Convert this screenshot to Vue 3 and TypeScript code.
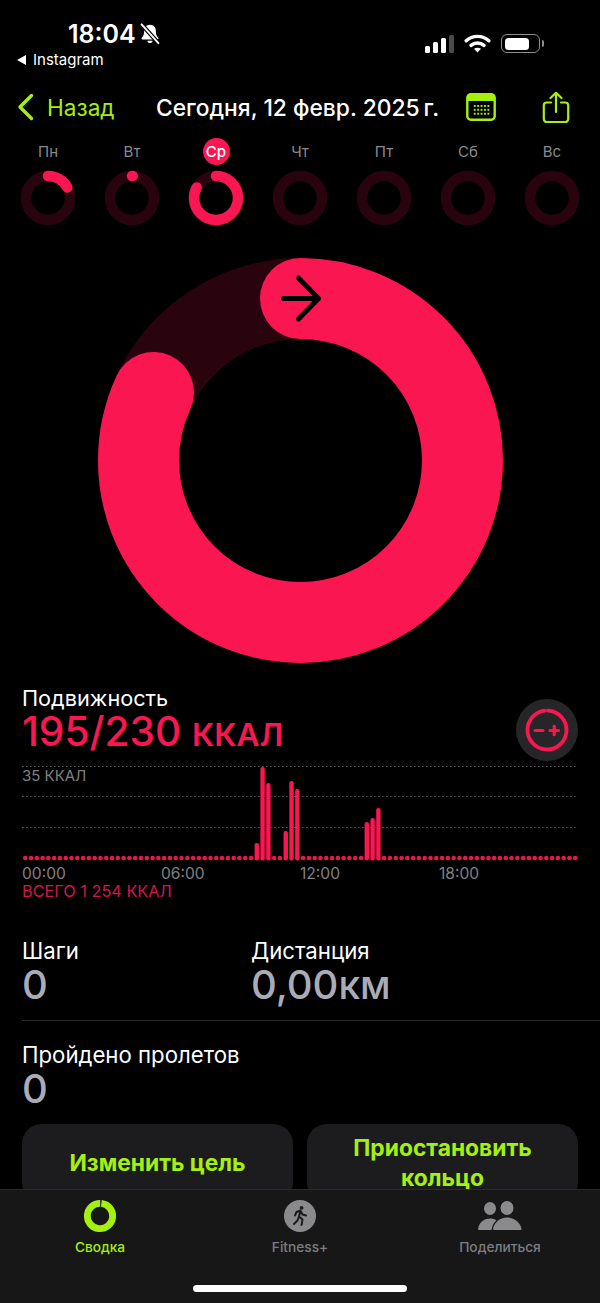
<script setup lang="ts">
const days = [
  { label: 'Пн', value: 17, today: false },
  { label: 'Вт', value: 0.6, today: false },
  { label: 'Ср', value: 83, today: true },
  { label: 'Чт', value: 0, today: false },
  { label: 'Пт', value: 0, today: false },
  { label: 'Сб', value: 0, today: false },
  { label: 'Вс', value: 0, today: false },
]

// quarter-hour buckets, value = bar top in chart px (0 = highest)
const tall: Record<number, number> = {
  40: 77,
  41: 1,
  42: 17,
  45: 65,
  46: 15,
  47: 23,
  59: 56,
  60: 52,
  61: 42,
}
const buckets = Array.from({ length: 96 }, (_, i) => ({
  x: 3.2 + i * 5.79,
  top: tall[i],
}))

const gridLines = [0.5, 30.5, 61.5]
const hours = ['00:00', '06:00', '12:00', '18:00']
const calDots = [0, 1, 2, 3, 4].flatMap((c) => [0, 1, 2].map((r) => ({ c, r })))
</script>

<template>
  <div class="screen">
    <header class="status">
      <div class="status-left">
        <div class="clock">
          <span>18:04</span>
          <svg width="22" height="22" viewBox="0 0 21 20">
            <path d="M10.5 1.2c-3.6 0-5.6 2.7-5.6 6 0 3.2-.6 4.6-2.3 6.6-.5.6-.1 1.4.7 1.4h14.4c.8 0 1.2-.8.7-1.4-1.7-2-2.300-3.400-2.300-6.600 0-3.300-2-6-5.600-6z" fill="#fff" />
            <path d="M8 16.400h5c-.2 1.300-1.200 2.200-2.500 2.200S8.200 17.700 8 16.400z" fill="#fff" />
            <path d="M2.500 .8l16 18" stroke="#000" stroke-width="4" />
            <path d="M2.500 .8l16 18" stroke="#fff" stroke-width="1.800" stroke-linecap="round" />
          </svg>
        </div>
        <div class="back-app"><i class="tri"></i>Instagram</div>
      </div>
      <div class="status-right">
        <div class="signal">
          <i style="height: 7px"></i>
          <i style="height: 11px"></i>
          <i style="height: 15px"></i>
          <i class="off" style="height: 18px"></i>
        </div>
        <svg width="27" height="19" viewBox="0 0 27 19" fill="none" stroke="#fff" stroke-width="3.400" stroke-linecap="round">
          <path d="M2.200 6.800C8.500.9 18.500.9 24.800 6.800" />
          <path d="M7 11.400c3.700-3.200 9.300-3.200 13 0" />
          <path d="M13.500 18.400l-3.500-3.700c2-1.400 5-1.400 7 0z" fill="#fff" stroke="none" />
        </svg>
        <div class="battery">
          <div class="battery-body"><i></i></div>
          <b></b>
        </div>
      </div>
    </header>

    <nav class="topbar">
      <div class="back">
        <svg width="17" height="28" viewBox="0 0 17 28" fill="none">
          <path d="M14.500 2.500L3 14l11.500 11.500" stroke="#a4f00f" stroke-width="3.400" stroke-linecap="round" stroke-linejoin="round" />
        </svg>
        <span>Назад</span>
      </div>
      <div class="title">Сегодня, 12 февр. 2025&#8239;г.</div>
      <div class="actions">
        <svg width="30" height="28" viewBox="0 0 30 28">
          <rect x="1.300" y="1.300" width="27.400" height="25.400" rx="3.500" fill="none" stroke="#a4f00f" stroke-width="2.400" />
          <path d="M1 4a3 3 0 0 1 3-3h22a3 3 0 0 1 3 3v4H1z" fill="#a4f00f" />
          <rect
            v-for="d in calDots"
            :key="`${d.c}-${d.r}`"
            :x="7.800 + d.c * 3.400"
            :y="12 + d.r * 3.900"
            width="1.900"
            height="1.900"
            fill="#a4f00f"
          />
        </svg>
        <svg width="28" height="33" viewBox="0 0 28 33" fill="none" stroke="#a4f00f" stroke-width="2.200" stroke-linecap="round" stroke-linejoin="round">
          <path d="M9 11.500H4.800a3 3 0 0 0-3 3V28a3 3 0 0 0 3 3h18.400a3 3 0 0 0 3-3V14.500a3 3 0 0 0-3-3H19" />
          <path d="M14 21V2M8.500 7L14 1.800 19.500 7" />
        </svg>
      </div>
    </nav>

    <section class="week">
      <div v-for="day in days" :key="day.label" class="day">
        <span class="day-label" :class="{ today: day.today }">{{ day.label }}</span>
        <svg width="56" height="56" viewBox="0 0 56 56" class="day-ring">
          <circle cx="28" cy="28" r="22" fill="none" stroke="#29040f" stroke-width="10.500" />
          <circle
            v-if="day.value"
            cx="28"
            cy="28"
            r="22"
            fill="none"
            stroke="#fa1650"
            stroke-width="10.500"
            stroke-linecap="round"
            pathLength="100"
            :stroke-dasharray="`${day.value} 100`"
            transform="rotate(-90 28 28)"
          />
        </svg>
      </div>
    </section>

    <div class="ring-wrap">
      <svg width="405" height="405" viewBox="0 0 405 405">
        <circle cx="202.500" cy="202.500" r="162" fill="none" stroke="#29040f" stroke-width="81" />
        <circle
          cx="202.500"
          cy="202.500"
          r="162"
          fill="none"
          stroke="#fa1650"
          stroke-width="81"
          stroke-linecap="round"
          pathLength="100"
          stroke-dasharray="81.900 100"
          transform="rotate(-90 202.500 202.500)"
        />
        <path
          d="M185.500 40.500h35M200.500 20l20 20.500-20 20.500"
          fill="none"
          stroke="#000"
          stroke-width="5"
          stroke-linecap="round"
          stroke-linejoin="round"
        />
      </svg>
    </div>

    <section class="move">
      <div class="move-head">
        <div>
          <div class="label move-label">Подвижность</div>
          <div class="move-value">195/230 <span>ККАЛ</span></div>
        </div>
        <div class="goal-btn">
          <svg width="46" height="46" viewBox="0 0 46 46" fill="none" stroke="#fa1650" stroke-linecap="round">
            <circle cx="23" cy="23" r="19.500" stroke-width="3.800" pathLength="100" stroke-dasharray="97 100" transform="rotate(-87 23 23)" />
            <path d="M11 23.500h8M26 23.500h8.500M30.200 19.300v8.400" stroke-width="3.200" />
          </svg>
        </div>
      </div>

      <div class="chart">
        <svg width="556" height="98" viewBox="0 0 556 98">
          <line
            v-for="y in gridLines"
            :key="y"
            x1="0"
            x2="556"
            :y1="y"
            :y2="y"
            stroke="#5a5a5c"
            stroke-width="1"
            stroke-dasharray="1.500 2.500"
          />
          <template v-for="(b, i) in buckets" :key="i">
            <rect v-if="b.top !== undefined" :x="b.x - 2.200" :y="b.top" width="4.400" :height="94.500 - b.top" rx="2" fill="#fa1650" />
            <circle v-else :cx="b.x" cy="92" r="2.300" fill="#e8174e" />
          </template>
        </svg>
        <span class="chart-max">35 ККАЛ</span>
      </div>
      <div class="hours">
        <span v-for="h in hours" :key="h">{{ h }}</span>
      </div>
      <div class="total">ВСЕГО 1 254 ККАЛ</div>
    </section>

    <section class="stats">
      <div class="stat-steps">
        <div class="label">Шаги</div>
        <div class="stat-value">0</div>
      </div>
      <div>
        <div class="label">Дистанция</div>
        <div class="stat-value">0,00<small>км</small></div>
      </div>
    </section>
    <div class="divider"></div>
    <section class="floors">
      <div class="label">Пройдено пролетов</div>
      <div class="stat-value">0</div>
    </section>

    <section class="buttons">
      <div class="btn">Изменить цель</div>
      <div class="btn">Приостановить кольцо</div>
    </section>

    <footer class="tabbar">
      <div class="tab active">
        <svg width="34" height="34" viewBox="0 0 34 34" fill="none">
          <circle cx="17" cy="17" r="12.700" stroke="#a4f00f" stroke-width="6.800" pathLength="100" stroke-dasharray="98.500 100" transform="rotate(-84 17 17)" />
        </svg>
        <span>Сводка</span>
      </div>
      <div class="tab">
        <svg width="34" height="34" viewBox="0 0 34 34">
          <circle cx="17" cy="17" r="16" fill="#8a8a8c" />
          <circle cx="18.600" cy="8.800" r="1.900" fill="#1b1b1b" />
          <path d="M17.500 11.500l-4 1.500-1.500 3.500M17.500 11.500l-1.500 6 3.500 3-1 5.500M16 17.500l-1.500 4-3.500 3.500M17.500 12l2 3.500 3.500 1" fill="none" stroke="#1b1b1b" stroke-width="2" stroke-linecap="round" stroke-linejoin="round" />
        </svg>
        <span>Fitness+</span>
      </div>
      <div class="tab">
        <svg width="44" height="34" viewBox="0 0 44 34" fill="#8a8a8c">
          <ellipse cx="12" cy="9.500" rx="6" ry="6.500" />
          <ellipse cx="29" cy="9" rx="6.500" ry="7" />
          <path d="M1 31c-.6 0-1-.4-.9-1 .8-6 5.400-10.500 12-10.500 2.500 0 4.600.6 6.300 1.800C15.600 24 14 27.300 13.600 31z" />
          <path d="M16 31c-.7 0-1.100-.5-1-1.100C16 24 21.500 18.500 29 18.500S42.500 24 43.500 29.900c.1.600-.3 1.100-1 1.100z" />
        </svg>
        <span>Поделиться</span>
      </div>
      <i class="home"></i>
    </footer>
  </div>
</template>

<style scoped>
.screen {
  position: relative;
  width: 600px;
  height: 1303px;
  overflow: hidden;
  background: #000;
  color: #fff;
  font-family: Inter, "Liberation Sans", sans-serif;
}
.status {
  height: 76px;
  display: flex;
  justify-content: space-between;
  box-sizing: border-box;
  padding: 20px 56px 0 17px;
}
.clock {
  display: flex;
  align-items: center;
  gap: 3px;
  margin-left: 51px;
  font-size: 25px;
  font-weight: 600;
  line-height: 28px;
}
.back-app {
  display: flex;
  align-items: center;
  gap: 7px;
  margin-top: 2px;
  font-size: 15px;
  line-height: 20px;
}
.tri {
  width: 0;
  height: 0;
  border-style: solid;
  border-width: 5px 9px 5px 0;
  border-color: transparent #fff transparent transparent;
}
.status-right {
  display: flex;
  align-items: flex-end;
  gap: 10px;
  height: 33px;
}
.signal {
  display: flex;
  align-items: flex-end;
  gap: 3px;
}
.signal i {
  width: 5px;
  border-radius: 1.500px;
  background: #fff;
}
.signal i.off {
  background: #4a4a4c;
}
.battery {
  display: flex;
  align-items: center;
  gap: 2px;
}
.battery-body {
  width: 39px;
  height: 19px;
  box-sizing: border-box;
  padding: 2.500px;
  border: 1.500px solid #8e8e90;
  border-radius: 6px;
}
.battery-body i {
  display: block;
  width: 24px;
  height: 100%;
  border-radius: 3.500px;
  background: #fff;
}
.battery b {
  width: 2px;
  height: 7px;
  border-radius: 0 2px 2px 0;
  background: #8e8e90;
}
.topbar {
  height: 62px;
  display: flex;
  align-items: center;
  box-sizing: border-box;
  padding-left: 17px;
}
.back {
  display: flex;
  align-items: center;
  gap: 13px;
  width: 139px;
  color: #a4f00f;
  font-size: 22.600px;
}
.title {
  width: 283px;
  font-size: 22.800px;
  font-weight: 500;
  white-space: nowrap;
}
.actions {
  display: flex;
  align-items: center;
  gap: 46px;
  margin-left: 27px;
}
.week {
  display: grid;
  grid-template-columns: repeat(7, 84px);
  padding-left: 6px;
}
.day {
  display: flex;
  flex-direction: column;
  align-items: center;
}
.day-label {
  width: 27px;
  height: 27px;
  border-radius: 50%;
  color: #8a8a8c;
  font-size: 15px;
  line-height: 27px;
  text-align: center;
}
.day-label.today {
  background: #fa1650;
  color: #fff;
  font-weight: 500;
}
.day-ring {
  display: block;
  margin-top: 5px;
}
.ring-wrap {
  display: flex;
  justify-content: center;
  margin-top: 32px;
  padding-left: 1px;
}
.move {
  padding: 22px 22px 0;
}
.move-head {
  display: flex;
  justify-content: space-between;
  align-items: flex-start;
  height: 78px;
}
.label {
  font-size: 22.200px;
  line-height: 26px;
}
.move-label {
  font-size: 21.700px;
}
.move-value {
  color: #fa1650;
  font-size: 40.600px;
  font-weight: 450;
  line-height: 41px;
  white-space: nowrap;
}
.move-value span {
  font-size: 31.700px;
  font-weight: 600;
}
.goal-btn {
  display: flex;
  align-items: center;
  justify-content: center;
  width: 62px;
  height: 62px;
  margin-top: 14px;
  border-radius: 50%;
  background: #262628;
}
.chart {
  position: relative;
  margin-top: 3px;
}
.chart svg {
  display: block;
}
.chart-max {
  position: absolute;
  top: 1px;
  left: 0;
  color: #808082;
  font-size: 15px;
  line-height: 18px;
}
.hours {
  display: grid;
  grid-template-columns: repeat(4, 139px);
  margin-top: 1px;
  color: #808082;
  font-size: 15.600px;
  line-height: 18px;
}
.total {
  color: #d2164c;
  font-size: 16.300px;
  line-height: 16px;
}
.stats {
  display: flex;
  margin-top: 39px;
  padding: 0 22px;
}
.stat-steps {
  width: 229px;
}
.stat-value {
  color: #a9acb7;
  font-size: 40px;
  font-weight: 500;
  line-height: 42px;
}
.stat-value small {
  font-size: 39px;
  font-weight: 500;
}
.divider {
  height: 1px;
  margin: 14px 0 0 22px;
  background: #262628;
}
.floors {
  margin-top: 21px;
  padding: 0 22px;
}
.buttons {
  display: flex;
  gap: 14px;
  margin-top: 14px;
  padding: 0 22px;
}
.btn {
  display: flex;
  align-items: center;
  justify-content: center;
  box-sizing: border-box;
  width: 271px;
  height: 78px;
  padding: 0 40px;
  border-radius: 20px;
  background: #1c1c1e;
  color: #a4f00f;
  font-size: 22.800px;
  font-weight: 700;
  line-height: 30px;
  text-align: center;
}
.tabbar {
  position: absolute;
  left: 0;
  right: 0;
  bottom: 0;
  height: 114px;
  display: flex;
  box-sizing: border-box;
  padding-top: 9px;
  border-top: 1px solid #2a2a2c;
  background: #171718;
}
.tab {
  flex: 1;
  display: flex;
  flex-direction: column;
  align-items: center;
  gap: 5px;
  color: #7e7e82;
  font-size: 13.700px;
  font-weight: 500;
  line-height: 18px;
}
.tab.active {
  color: #a4f00f;
}
.home {
  position: absolute;
  left: 193px;
  bottom: 11px;
  width: 214px;
  height: 7px;
  border-radius: 4px;
  background: #fff;
}
</style>

<style>
html,
body {
  background: #000;
}
</style>
